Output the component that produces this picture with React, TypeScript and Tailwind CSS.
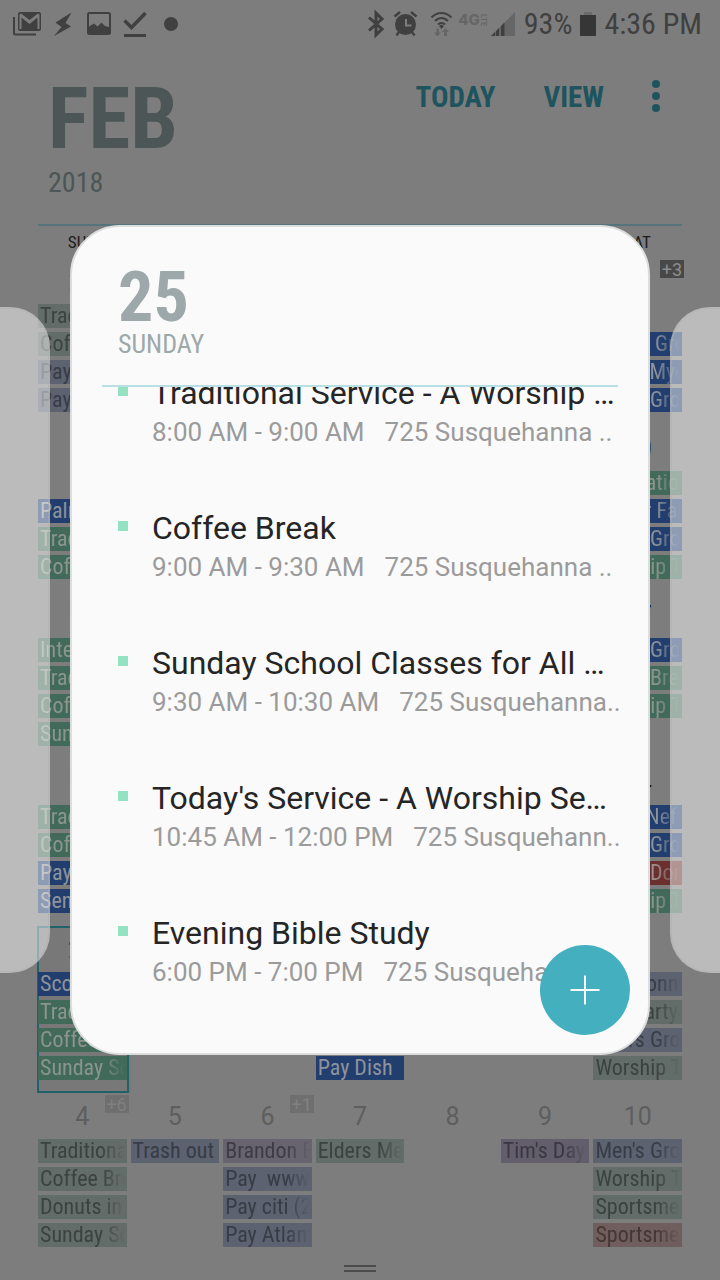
type Tone = "sage" | "slate" | "mauve" | "plum" | "rose" | "blue" | "green" | "red" | "none";

type Entry = { title: string; tone: Tone };

type Day = { date: number; muted?: boolean; today?: boolean; more?: number; entries?: Entry[] };

const tones: Record<Tone, string> = {
	sage: "bg-[#626c68] text-[#3b423f]",
	slate: "bg-[#5c6270] text-[#383c45]",
	mauve: "bg-[#67646f] text-[#3e3b44]",
	plum: "bg-[#635e6b] text-[#3b3742]",
	rose: "bg-[#6f5e5d] text-[#433635]",
	blue: "bg-[#213e6e] text-[#8e939b]",
	green: "bg-[#426a5a] text-[#8b958f]",
	red: "bg-[#6b302d] text-[#9a8d8c]",
	none: "invisible",
};

const e = (tone: Tone, title: string): Entry => ({ tone, title });
const gap = e("none", "");

const weekdays = ["SUN", "MON", "TUE", "WED", "THU", "FRI", "SAT"];

const weeks: Day[][] = [
	[
		{ date: 28, muted: true, entries: [e("sage", "Traditional"), e("sage", "Coffee Break"), e("slate", "Pay Dish"), e("slate", "Pay Sprint")] },
		{ date: 29, muted: true },
		{ date: 30, muted: true },
		{ date: 31, muted: true },
		{ date: 1 },
		{ date: 2 },
		{ date: 3, more: 3, entries: [gap, e("blue", "Mike's Group"), e("blue", "Clean Myers"), e("blue", "Men's Group")] },
	],
	[
		{ date: 4, entries: [gap, e("blue", "Palms"), e("green", "Traditional"), e("green", "Coffee Break")] },
		{ date: 5 },
		{ date: 6 },
		{ date: 7 },
		{ date: 8 },
		{ date: 9 },
		{ date: 10, entries: [e("green", "Decorations"), e("blue", "Winter Fair"), e("blue", "Men's Group"), e("green", "Worship Team")] },
	],
	[
		{ date: 11, entries: [e("green", "Intercession"), e("green", "Traditional"), e("green", "Coffee Break"), e("green", "Sunday School")] },
		{ date: 12 },
		{ date: 13 },
		{ date: 14 },
		{ date: 15 },
		{ date: 16 },
		{ date: 17, entries: [e("blue", "Men's Group"), e("green", "Men's Breakfast"), e("green", "Worship Team")] },
	],
	[
		{ date: 18, entries: [e("green", "Traditional"), e("green", "Coffee Break"), e("blue", "Pay Dish"), e("blue", "Send")] },
		{ date: 19 },
		{ date: 20 },
		{ date: 21 },
		{ date: 22 },
		{ date: 23 },
		{ date: 24, entries: [e("blue", "Dan's Neff"), e("blue", "Men's Group"), e("red", "Men's Donuts"), e("green", "Worship Team")] },
	],
	[
		{ date: 25, today: true, entries: [e("blue", "Scouts"), e("green", "Traditional"), e("green", "Coffee Break"), e("green", "Sunday School")] },
		{ date: 26 },
		{ date: 27 },
		{ date: 28, entries: [gap, gap, gap, e("blue", "Pay Dish")] },
		{ date: 1, muted: true },
		{ date: 2, muted: true },
		{ date: 3, muted: true, entries: [e("slate", "Tim Connor"), e("sage", "Joe Party at"), e("slate", "Men's Group"), e("sage", "Worship Team")] },
	],
	[
		{ date: 4, muted: true, more: 6, entries: [e("sage", "Traditional"), e("sage", "Coffee Break"), e("sage", "Donuts in class"), e("sage", "Sunday School")] },
		{ date: 5, muted: true, entries: [e("slate", "Trash out")] },
		{ date: 6, muted: true, more: 1, entries: [e("mauve", "Brandon Birthday"), e("slate", "Pay  www.att"), e("slate", "Pay citi (2)"), e("slate", "Pay Atlantic")] },
		{ date: 7, muted: true, entries: [e("sage", "Elders Meeting")] },
		{ date: 8, muted: true },
		{ date: 9, muted: true, entries: [e("plum", "Tim's Day off")] },
		{ date: 10, muted: true, entries: [e("slate", "Men's Group"), e("sage", "Worship Team"), e("sage", "Sportsmen's"), e("rose", "Sportsmen's")] },
	],
];

const agenda = [
	{ title: "Traditional Service - A Worship …", time: "8:00 AM - 9:00 AM", place: "725 Susquehanna .." },
	{ title: "Coffee Break", time: "9:00 AM - 9:30 AM", place: "725 Susquehanna .." },
	{ title: "Sunday School Classes for All …", time: "9:30 AM - 10:30 AM", place: "725 Susquehanna.." },
	{ title: "Today's Service - A Worship Se…", time: "10:45 AM - 12:00 PM", place: "725 Susquehann.." },
	{ title: "Evening Bible Study", time: "6:00 PM - 7:00 PM", place: "725 Susquehanna .." },
];

const StatusBar = () => (
	<div className="flex h-12 items-center justify-between pr-[18px] pl-3 text-[#404040]">
		<svg className="h-8 w-44" viewBox="0 0 176 32" fill="currentColor">
			{/* mail */}
			<path d="M1 9h2v16.500h21v2H3a2 2 0 0 1-2-2z" />
			<path fillRule="evenodd" d="M8 4h19a2 2 0 0 1 2 2v15a2 2 0 0 1-2 2H8a2 2 0 0 1-2-2V6a2 2 0 0 1 2-2zm-.5 2.500V21h2V9.500l8 6.500 8-6.500V21h2V6.500l-1.500-1-8.500 6.500-8.500-6.500z" />
			{/* bolt */}
			<path d="M59.500 4.500 43.500 14.500l6 4.500-7.500 9 17-9.500-5.500-3.500z" />
			{/* photo */}
			<path fillRule="evenodd" d="M77.500 4h19a2.500 2.500 0 0 1 2.500 2.500v18a2.500 2.500 0 0 1-2.500 2.500h-19a2.500 2.500 0 0 1-2.500-2.500v-18a2.500 2.500 0 0 1 2.500-2.500zm-.5 2v12.500l5-3 3.500 3 4-4 3.500 3.500 4 1V6z" />
			{/* check */}
			<path d="m112.500 12.500 7 7L133.500 5" fill="none" stroke="currentColor" strokeWidth="3.500" />
			<path d="M112 26h22v3h-22z" />
			<circle cx="159" cy="16" r="7" />
		</svg>
		<div className="flex items-center font-['Roboto_Condensed',Roboto,sans-serif] text-[30px] leading-9">
			<svg className="h-8 w-[88px]" viewBox="0 0 88 32" fill="none" stroke="currentColor">
				{/* bluetooth */}
				<path d="m1 9.500 13 11.500-6 6V5l6 6L1 22.500" strokeWidth="3" />
				{/* alarm */}
				<circle cx="37.500" cy="16.500" r="10.500" fill="currentColor" stroke="none" />
				<path d="m26.500 8.500 5.500-4.500M48.500 8.500 43 4M31 24 28.500 27.500M44 24l2.500 3.500" strokeWidth="2.400" />
				<path d="M38 11v6.500h5.500" stroke="#7d7d7d" strokeWidth="2" />
				{/* wifi */}
				<path d="M63.500 9.500c6-6 14-6 20 0M67 13c4-4 9-4 13 0M70 16.500c2-2 5-2 7 0" strokeWidth="2.200" />
				<path d="m71 18 2.500-1.500 2.500 1.500-2.500 3z" fill="currentColor" stroke="none" />
				<path d="M68.500 20.500h2.500v4h2L69.500 28.500 66 24.500h2.500zM76 28h3v-4h2L77.500 20 74 24h2z" fill="#666" stroke="none" />
			</svg>
			<div className="ml-0.5 flex h-4 items-center pb-2 font-[Inter,sans-serif] text-[#666]">
				<span className="text-[15px] leading-4 font-extrabold">4G</span>
				<span className="text-[7px] leading-[6px] font-bold [writing-mode:vertical-rl]">LTE</span>
			</div>
			<svg className="ml-1 h-8 w-[26px]" viewBox="0 0 26 32">
				<path d="M1 28 25 4v24z" fill="#666" />
				<path d="m1 28 4-4v4zM6 23l3-3v8H6zM11 18l3.500-3.500V28H11z" fill="#404040" />
			</svg>
			<span className="ml-2">93%</span>
			<svg className="ml-2 h-8 w-4" viewBox="0 0 16 32">
				<path d="M4 4h8v3H4z" fill="#6a6a6a" />
				<path d="M0 7h16v21H0z" fill="#363636" />
			</svg>
			<span className="ml-2">4:36 PM</span>
		</div>
	</div>
);

const Header = () => (
	<header className="flex justify-between px-12 pt-[31px] pb-[25px] font-['Roboto_Condensed',Roboto,sans-serif]">
		<div className="text-[#4d5656]">
			<h1 className="text-[85px] leading-20 font-bold">FEB</h1>
			<p className="mt-2 text-[28px] leading-8">2018</p>
		</div>
		<nav className="flex h-9 items-center text-[29px] leading-9 font-bold text-[#1e545d]">
			<button>TODAY</button>
			<button className="ml-12">VIEW</button>
			<button className="ml-9" aria-label="More options">
				<svg className="h-9 w-8" viewBox="0 0 32 36" fill="currentColor">
					<circle cx="16" cy="5" r="4" />
					<circle cx="16" cy="17" r="4" />
					<circle cx="16" cy="29" r="4" />
				</svg>
			</button>
		</nav>
	</header>
);

const DayCell = (props: { day: Day }) => {
	const { day } = props;

	return (
		<td className="h-[167px] p-0 align-top">
			<div className={day.today ? "relative h-[167px] bg-[#787878]" : "relative h-[167px]"}>
				{day.today && <div className="absolute inset-y-0 right-[2px] -left-px border-2 border-[#20616a]" />}
				<div className={`mr-1 pt-1.5 pb-1 text-center text-[25px] leading-9 ${day.muted ? "text-[#5e5e5e]" : "text-[#111]"}`}>{day.date}</div>
				{day.more && (
					<span className={`absolute top-0.5 right-[2px] h-[18px] w-6 text-center text-[18px] leading-5 ${day.muted ? "bg-[#6f6f6f] text-[#808080]" : "bg-[#484848] text-[#8c8c8c]"}`}>
						+{day.more}
					</span>
				)}
				<ul className="relative mr-1 flex flex-col gap-1 font-['Roboto_Condensed',Roboto,sans-serif] text-[22px] leading-6">
					{(day.entries || []).map((entry, i) => (
						<li className={`h-6 overflow-hidden px-0.5 whitespace-pre ${tones[entry.tone]}`} key={i}>
							{/* short titles fit, the rest fade out at the right edge */}
							<div className={entry.title.length > 9 ? "overflow-hidden [mask-image:linear-gradient(to_right,black_72%,transparent)]" : ""}>{entry.title}</div>
						</li>
					))}
				</ul>
			</div>
		</td>
	);
};

const Month = () => (
	<main className="pr-[34px] pl-[38px]">
		<div className="mr-1 h-0.5 bg-[#56757a]" />
		<table className="w-full table-fixed border-separate border-spacing-0">
			<thead>
				<tr className="h-8 font-['Roboto_Condensed',Roboto,sans-serif] text-[17px] leading-5 text-[#1c1c1c]">
					{weekdays.map((name) => (
						<th className="p-0 pr-1 font-normal" key={name}>
							{name}
						</th>
					))}
				</tr>
			</thead>
			<tbody>
				{weeks.map((week, i) => (
					<tr key={i}>
						{week.map((day) => (
							<DayCell day={day} key={day.date} />
						))}
					</tr>
				))}
			</tbody>
		</table>
	</main>
);

const DayCard = () => (
	<section className="relative min-w-0 flex-1 overflow-hidden rounded-[50px] border-2 border-[#dcdede] bg-[#fafafa]">
		<div className="mx-[30px] border-b-2 border-[#b8e0e4] px-4 pt-9 pb-7 font-['Roboto_Condensed',Roboto,sans-serif] text-[#9ca8a9]">
			<h2 className="text-[70px] leading-[68px] font-bold">25</h2>
			<p className="text-[26px] leading-[26px]">SUNDAY</p>
		</div>
		<div className="overflow-hidden">
			<ul className="-mt-4 flex flex-col gap-[57px] pr-[30px] pb-16 pl-[46px]">
				{agenda.map((item) => (
					<li className="flex gap-6" key={item.title}>
						<span className="mt-[15px] h-2.5 w-2.5 shrink-0 bg-[#93e2c1]" />
						<div className="min-w-0 whitespace-nowrap">
							<h3 className="text-[32px] leading-11 text-[#252525]">{item.title}</h3>
							<p className="flex gap-5 text-[26px] leading-[34px] text-[#9b9b9b]">
								<span>{item.time}</span>
								<span>{item.place}</span>
							</p>
						</div>
					</li>
				))}
			</ul>
		</div>
		<button className="absolute right-[18px] bottom-[18px] flex size-[90px] items-center justify-center rounded-full bg-[#43afbf]" aria-label="Add event">
			<svg className="h-[30px] w-[30px]" viewBox="0 0 30 30" stroke="#fafafa" strokeWidth="2">
				<path d="M15 .5v29M.5 15h29" />
			</svg>
		</button>
	</section>
);

const App = () => (
	<div className="relative min-h-screen overflow-hidden bg-[#7d7d7d] font-[Roboto,sans-serif]">
		<StatusBar />
		<Header />
		<Month />
		<div className="flex flex-col items-center gap-[3px] pt-[5px] pb-2">
			<div className="h-0.5 w-8 bg-[#4c4c4c]" />
			<div className="h-0.5 w-8 bg-[#4c4c4c]" />
		</div>
		<div className="absolute inset-0 flex items-center gap-5">
			<div className="h-[52%] w-[50px] rounded-r-[40px] border-2 border-l-0 border-[#b0b0b0]/40 bg-[#fafafa]/50" />
			<DayCard />
			<div className="h-[52%] w-[50px] rounded-l-[40px] border-2 border-r-0 border-[#b0b0b0]/40 bg-[#fafafa]/50" />
		</div>
	</div>
);

export default App;
